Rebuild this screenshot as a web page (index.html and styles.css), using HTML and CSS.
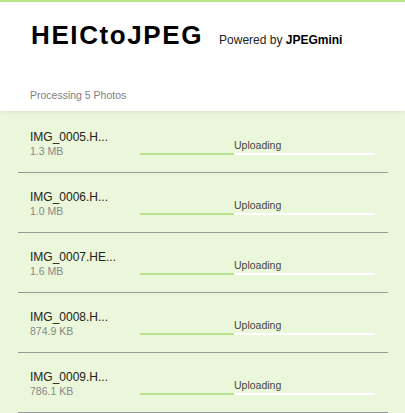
FILE: index.html
```html
<!DOCTYPE html>
<html lang="en">
<head>
  <meta charset="UTF-8" />
  <title>HEICtoJPEG</title>
  <link rel="stylesheet" href="styles.css">
</head>
<body>
  <header class="header">
    <div class="brand">
      <h1>HEICtoJPEG</h1>
      <span class="powered">Powered by <b>JPEGmini</b></span>
    </div>
    <p class="status">Processing 5 Photos</p>
  </header>

  <ul class="files">
    <li class="file">
      <div class="info">
        <div class="name">IMG_0005.H...</div>
        <div class="size">1.3 MB</div>
      </div>
      <div class="progress">
        <div class="fill" style="width: 40%"></div>
        <div class="rest">
          <span class="label">Uploading</span>
          <div class="track"></div>
        </div>
      </div>
    </li>
    <li class="file">
      <div class="info">
        <div class="name">IMG_0006.H...</div>
        <div class="size">1.0 MB</div>
      </div>
      <div class="progress">
        <div class="fill" style="width: 40%"></div>
        <div class="rest">
          <span class="label">Uploading</span>
          <div class="track"></div>
        </div>
      </div>
    </li>
    <li class="file">
      <div class="info">
        <div class="name">IMG_0007.HE...</div>
        <div class="size">1.6 MB</div>
      </div>
      <div class="progress">
        <div class="fill" style="width: 40%"></div>
        <div class="rest">
          <span class="label">Uploading</span>
          <div class="track"></div>
        </div>
      </div>
    </li>
    <li class="file">
      <div class="info">
        <div class="name">IMG_0008.H...</div>
        <div class="size">874.9 KB</div>
      </div>
      <div class="progress">
        <div class="fill" style="width: 40%"></div>
        <div class="rest">
          <span class="label">Uploading</span>
          <div class="track"></div>
        </div>
      </div>
    </li>
    <li class="file">
      <div class="info">
        <div class="name">IMG_0009.H...</div>
        <div class="size">786.1 KB</div>
      </div>
      <div class="progress">
        <div class="fill" style="width: 40%"></div>
        <div class="rest">
          <span class="label">Uploading</span>
          <div class="track"></div>
        </div>
      </div>
    </li>
  </ul>
</body>
</html>
```

FILE: styles.css
```css
body {
  margin: 0;
  padding: 0;
  background: #eaf7da;
  font-family: 'Liberation Sans', Arial, sans-serif;
  color: #1a1a1a;
  border-top: 2px solid #b9e38c;
  overflow: hidden;
}

.header {
  background: #fff;
  padding: 0 31px 13px;
  height: 96px;
  box-shadow: 0 1px 4px rgba(0, 0, 0, 0.08);
  position: relative;
  z-index: 1;
}

.brand {
  display: flex;
  align-items: baseline;
  gap: 16px;
  padding-top: 17px;
}

h1 {
  margin: 0;
  font-size: 26px;
  line-height: 32px;
  letter-spacing: 1.6px;
  font-weight: bold;
  color: #000;
}

.powered {
  font-size: 12px;
  color: #222;
  margin-bottom: -1px;
}

.powered b {
  color: #000;
}

.status {
  margin: 38px 0 0 -1px;
  font-size: 10.5px;
  color: #808080;
}

.files {
  list-style: none;
  margin: 2px 17px 0 18px;
  padding: 0;
}

.file {
  display: flex;
  height: 59px;
  border-bottom: 1px solid #999;
  padding-left: 12px;
}

.info {
  width: 110px;
  padding-top: 17px;
}

.name {
  font-size: 12px;
  line-height: 14px;
  color: #222;
}

.size {
  margin-top: 1px;
  font-size: 10.5px;
  line-height: 12px;
  color: #888;
}

.progress {
  width: 235px;
  display: flex;
  align-items: flex-end;
  height: 42px;
}

.fill {
  height: 2px;
  background: #b9e38c;
}

.rest {
  flex: 1;
}

.label {
  display: block;
  font-size: 10.5px;
  line-height: 12px;
  color: #444;
  padding-bottom: 2px;
}

.track {
  height: 2px;
  background: #fff;
}
```
